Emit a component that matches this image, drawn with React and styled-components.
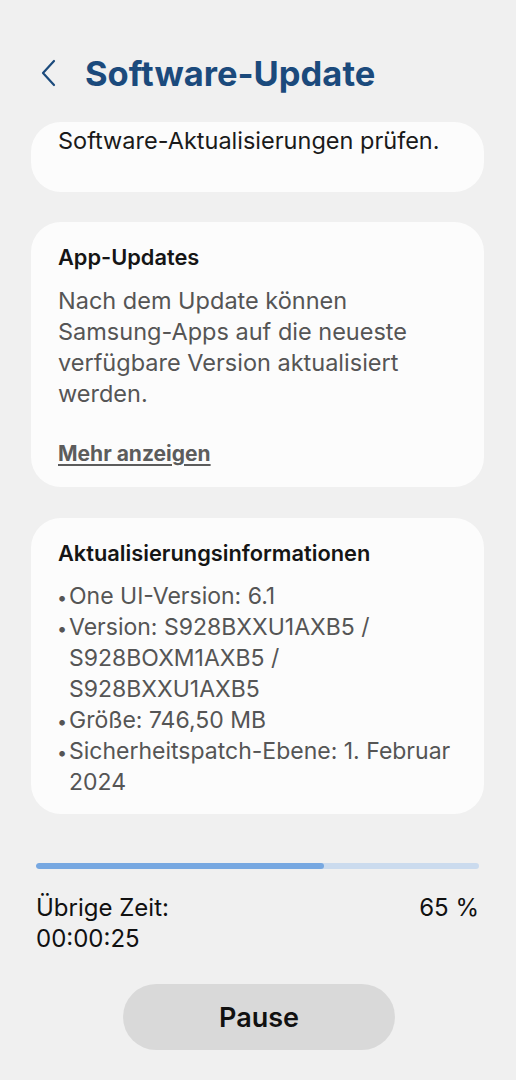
import React from "react";
import styled, { createGlobalStyle } from "styled-components";

const Global = createGlobalStyle`
  html, body {
    margin: 0;
    background: #f0f0f0;
  }
  body {
    font-family: "Inter", "Roboto", sans-serif;
    -webkit-font-smoothing: antialiased;
  }
`;

const Page = styled.div`
  width: 516px;
  height: 1080px;
  box-sizing: border-box;
  padding: 0 32px 0 31px;
  display: flex;
  flex-direction: column;
  overflow: hidden;
`;

const Header = styled.header`
  display: flex;
  align-items: center;
  gap: 28px;
  height: 50px;
  margin-top: 48px;
  padding-left: 9px;
`;

const BackIcon = styled.svg`
  width: 17px;
  height: 28px;
  flex: none;
`;

const Title = styled.h1`
  margin: 0;
  font-weight: 700;
  font-size: 34.5px;
  color: #1b4a7c;
`;

const Card = styled.section`
  background: #fcfcfc;
  border-radius: 30px;
  padding: ${p => p.$pad || "20px 27px 18px"};
  margin-top: ${p => p.$top || "31px"};
  min-height: ${p => p.$min || "auto"};
  box-sizing: border-box;
`;

const CardTitle = styled.h2`
  margin: 0 0 12px;
  font-weight: 600;
  font-size: 21.8px;
  line-height: 31px;
  color: #151515;
`;

const Body = styled.p`
  margin: 0;
  font-size: 23.5px;
  line-height: 31px;
  color: ${p => p.$dark ? "#1a1a1a" : "#555"};
`;

const MoreLink = styled.a`
  display: block;
  margin-top: 29px;
  font-size: 21px;
  line-height: 31px;
  font-weight: 700;
  color: #5c5c5c;
  text-decoration: underline;
  text-underline-offset: 3px;
`;

const List = styled.ul`
  list-style: none;
  margin: 0;
  padding: 0;
`;

const Item = styled.li`
  display: flex;
  align-items: baseline;
  font-size: 23px;
  line-height: 31px;
  color: #555;
  white-space: nowrap;
`;

const Bullet = styled.span`
  flex: none;
  width: 12px;
  margin-left: -1px;
  font-size: 18px;
  line-height: 18px;
`;

const Progress = styled.div`
  margin: 49px 5px 0;
  height: 6px;
  border-radius: 3px;
  background: #cbdbee;
  overflow: hidden;
`;

const Fill = styled.div`
  height: 100%;
  background: #77a8e1;
  border-radius: 3px;
`;

const Status = styled.div`
  display: flex;
  justify-content: space-between;
  align-items: flex-start;
  margin: 23px 5px 0;
  font-size: 24px;
  line-height: 31px;
  color: #111;
`;

const PauseButton = styled.button`
  align-self: center;
  margin-top: 30px;
  margin-left: 3px;
  width: 272px;
  height: 66px;
  border: none;
  border-radius: 33px;
  background: #d9d9d9;
  font-family: "Inter", "Roboto", sans-serif;
  font-weight: 600;
  font-size: 27px;
  color: #111;
`;

const info = [
  ["One UI-Version: 6.1"],
  ["Version: S928BXXU1AXB5 /", "S928BOXM1AXB5 /", "S928BXXU1AXB5"],
  ["Größe: 746,50 MB"],
  ["Sicherheitspatch-Ebene: 1. Februar", "2024"],
];

export default function App() {
  const progress = 65;
  return (
    <>
      <Global />
      <Page>
        <Header>
          <BackIcon viewBox="0 0 17 28" fill="none">
            <polyline points="14,2 3,14 14,26" stroke="#1b4a7c" strokeWidth="2.2" strokeLinecap="round" strokeLinejoin="round" />
          </BackIcon>
          <Title>Software-Update</Title>
        </Header>

        <Card $top="24px" $pad="3px 27px 0" $min="70px">
          <Body $dark>Software-Aktualisierungen prüfen.</Body>
        </Card>

        <Card $top="30px">
          <CardTitle>App-Updates</CardTitle>
          <Body>
            Nach dem Update können<br />
            Samsung-Apps auf die neueste<br />
            verfügbare Version aktualisiert<br />
            werden.
          </Body>
          <MoreLink>Mehr anzeigen</MoreLink>
        </Card>

        <Card $top="31px" $pad="20px 27px 16px">
          <CardTitle>Aktualisierungsinformationen</CardTitle>
          <List>
            {info.map((lines, i) => (
              <Item key={i}>
                <Bullet>•</Bullet>
                <span>
                  {lines.map((l, j) => (
                    <React.Fragment key={j}>
                      {j > 0 && <br />}
                      {l}
                    </React.Fragment>
                  ))}
                </span>
              </Item>
            ))}
          </List>
        </Card>

        <Progress>
          <Fill style={{ width: `${progress}%` }} />
        </Progress>

        <Status>
          <span>Übrige Zeit:<br />00:00:25</span>
          <span>{progress} %</span>
        </Status>

        <PauseButton>Pause</PauseButton>
      </Page>
    </>
  );
}
